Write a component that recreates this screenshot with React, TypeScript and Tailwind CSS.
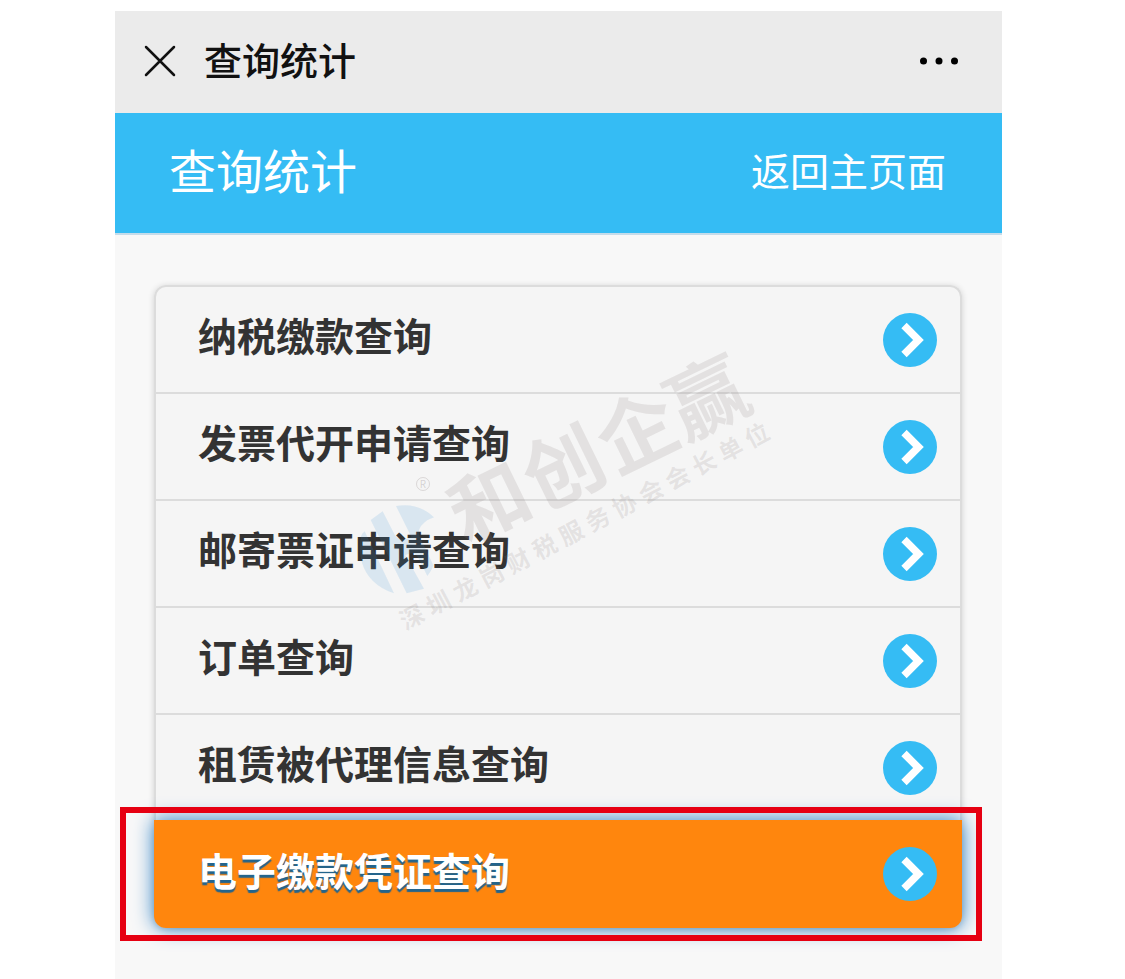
import React from "react";

const items = [
  "纳税缴款查询",
  "发票代开申请查询",
  "邮寄票证申请查询",
  "订单查询",
  "租赁被代理信息查询",
  "电子缴款凭证查询",
];

const activeItem = "电子缴款凭证查询";

function ArrowIcon() {
  return (
    <svg viewBox="0 0 54 54" className="size-[54px] shrink-0" aria-hidden="true">
      <circle cx="27" cy="27" r="27" fill="#35bcf4" />
      <path d="M21 12.5 L35.5 27 L21 41.5" fill="none" stroke="#fff" strokeWidth="7.5" />
    </svg>
  );
}

// Company stamp printed diagonally across the list
function Watermark() {
  return (
    <svg
      viewBox="0 0 460 350"
      className="pointer-events-none absolute top-[29px] left-[196px] h-[350px] w-[460px]"
      aria-hidden="true"
    >
      <g transform="translate(0 180) scale(0.33333)" fill="#2f8fd8" fillOpacity="0.14">
        <path d="M62 78 L98 52 L136 126 Q150 140 172 134 L184 128 L138 36 Q204 24 252 70 Q218 82 208 106 Q204 118 210 130 L250 214 Q246 228 232 246 L204 190 Q192 172 174 180 L166 184 L222 284 L170 298 Z" />
        <path d="M33 128 Q36 118 44 112 L132 298 Q56 272 36 206 Q24 164 33 128 Z" />
      </g>
      <g fill="#8a7f7f" fillOpacity="0.16" fontFamily="'Noto Sans CJK SC', sans-serif" fontWeight="700" textAnchor="middle">
        <g transform="translate(139 188) rotate(-26)" fontSize="79">
          <text x="0" y="31">和</text>
          <text x="82" y="31">创</text>
          <text x="164" y="31">企</text>
          <text x="242" y="31">赢</text>
        </g>
        <g transform="translate(62 303) rotate(-27.8)" fontSize="24">
          {"深圳龙岗财税服务协会会长单位".split("").map((char, i) => (
            <text key={i} x={i * 30} y="9">{char}</text>
          ))}
        </g>
        <text x="73" y="174" fontSize="10" fontWeight="400" fillOpacity="0.3">R</text>
      </g>
      <circle cx="73" cy="170" r="6.5" fill="none" stroke="#8a7f7f" strokeOpacity="0.25" />
    </svg>
  );
}

export default function App() {
  return (
    <div className="flex min-h-screen flex-col bg-white pt-[11px] pr-[123px] pl-[115px] font-['Noto_Sans_CJK_SC',sans-serif]">
      <div className="flex flex-1 flex-col bg-[#f8f8f8]">
        <div className="flex h-[102px] items-center bg-[#ebebeb] pr-[43px] pb-0.5 pl-[29px] text-[#111]">
          <button type="button" aria-label="关闭" className="shrink-0">
            <svg viewBox="0 0 32 32" className="size-8" fill="none" stroke="currentColor" strokeWidth="2.5" strokeLinecap="round">
              <path d="M2 2 L30 30 M30 2 L2 30" />
            </svg>
          </button>
          <span className="ml-7 pb-1 text-[38px] leading-none font-medium">查询统计</span>
          <button type="button" aria-label="更多" className="ml-auto">
            <svg viewBox="0 0 40 8" className="h-2 w-10" fill="#000">
              <circle cx="4.5" cy="4" r="3.5" />
              <circle cx="20" cy="4" r="3.5" />
              <circle cx="35.5" cy="4" r="3.5" />
            </svg>
          </button>
        </div>

        <header className="flex h-[122px] items-center justify-between border-b-2 border-[#c5dcea] bg-[#35bcf4] pr-14 pb-2 pl-[54px] text-white">
          <h1 className="pb-0.5 text-[47px] leading-none">查询统计</h1>
          <a href="#home" className="text-[39px] leading-none">返回主页面</a>
        </header>

        <main className="pt-[50px] pr-10 pb-[50px] pl-[39px]">
          <div className="relative rounded-xl shadow-[0_1px_6px_rgba(0,0,0,0.16)]">
            <ul>
              {items.map((item) =>
                item === activeItem ? (
                  <li key={item} className="relative">
                    <a
                      href="#item"
                      className="flex h-[108px] items-center justify-between rounded-b-xl bg-[#ff860d] pr-[25px] pl-11 text-[39px] leading-none font-bold text-white shadow-[0_0_20px_#2b7fc4] [text-shadow:0_3px_1px_#23648c]"
                    >
                      <span className="pb-2.5">{item}</span>
                      <ArrowIcon />
                    </a>
                    <span className="pointer-events-none absolute -inset-y-[13px] -right-5 -left-[34px] border-[6px] border-[#e60012]" />
                  </li>
                ) : (
                  <li
                    key={item}
                    className="border-x-2 border-t-2 border-[#dcdcdc] bg-[#f5f5f5] first:rounded-t-xl"
                  >
                    <a
                      href="#item"
                      className="flex h-[105px] items-center justify-between pr-[23px] pl-[42px] text-[39px] leading-none font-bold text-[#333]"
                    >
                      <span className="pb-2.5">{item}</span>
                      <ArrowIcon />
                    </a>
                  </li>
                )
              )}
            </ul>
            <Watermark />
          </div>
        </main>
      </div>
    </div>
  );
}
